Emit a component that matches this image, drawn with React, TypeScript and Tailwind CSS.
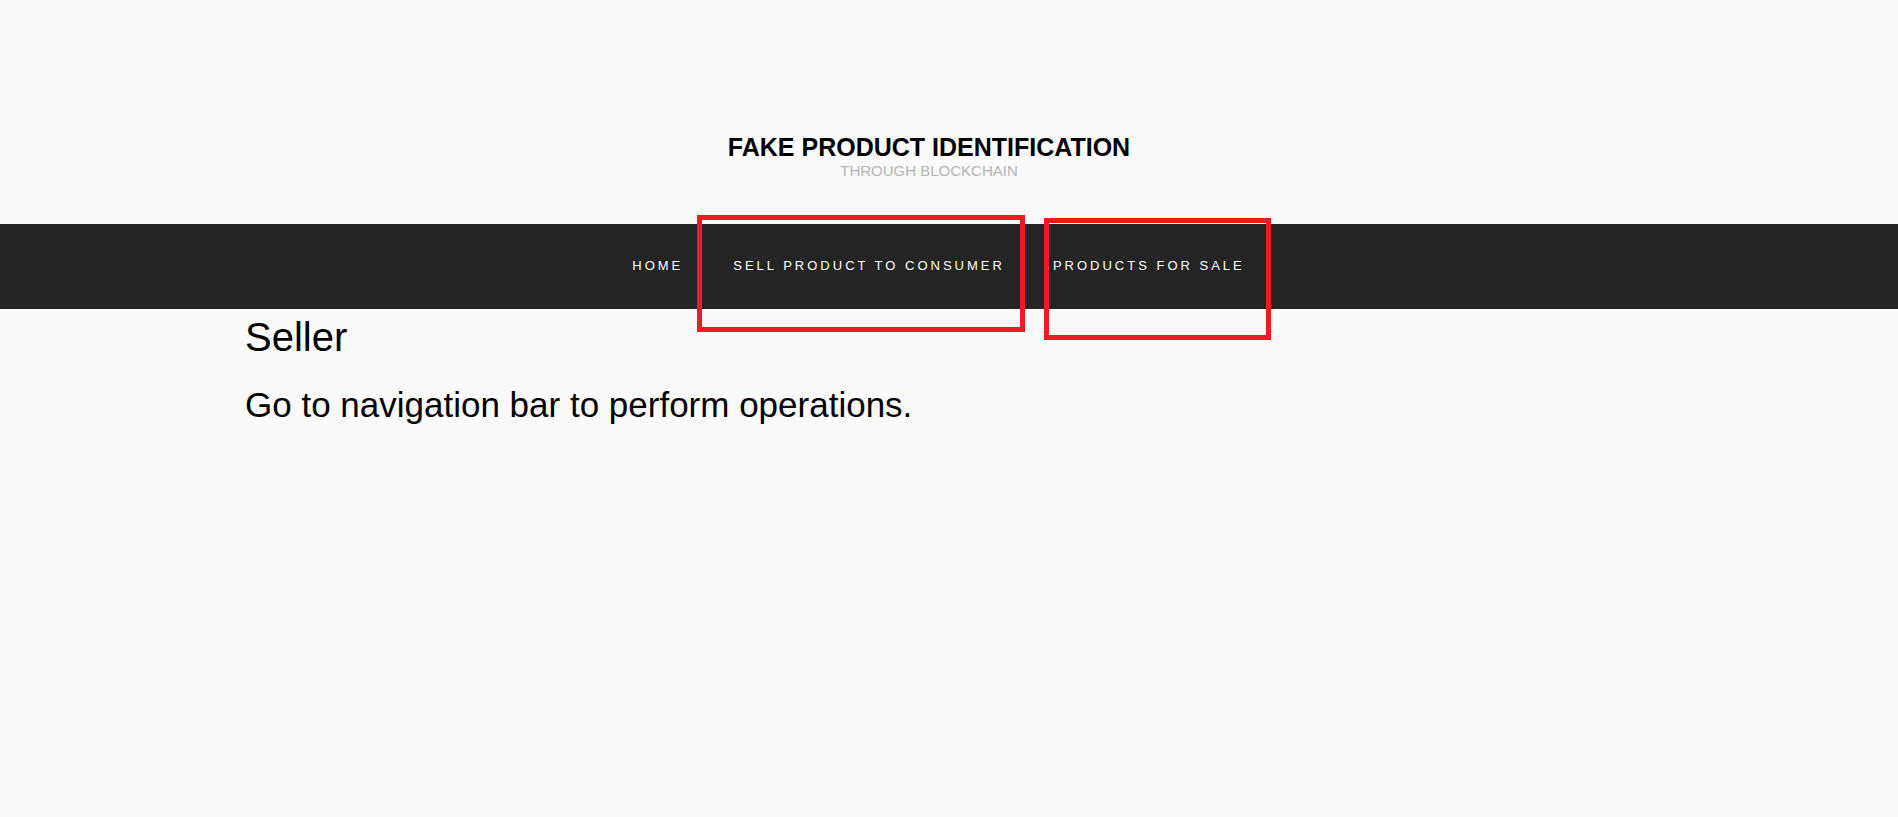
export default function App() {
  const links = ['HOME', 'SELL PRODUCT TO CONSUMER', 'PRODUCTS FOR SALE'];

  return (
    <div className="relative min-h-screen bg-[#fafafa] font-['Liberation_Sans',Arial,sans-serif] text-black">
      {/* Site title block */}
      <header className="flex flex-col items-center pt-[135px] pr-[40px]">
        <h1 className="text-[25px] leading-none font-bold">FAKE PRODUCT IDENTIFICATION</h1>
        <p className="mt-[3px] text-[15px] leading-none text-[#b5b5b5]">THROUGH BLOCKCHAIN</p>
      </header>

      <nav className="mt-[46px] flex h-[85px] items-center justify-center bg-[#242424] pr-[21px] pb-[3px]">
        <ul className="flex gap-[4px]">
          {links.map((l, i) => (
            <li key={l}>
              <a
                href="#"
                className={`block pl-[22px] text-[13px] leading-none tracking-[3px] text-white ${
                  i === 0 ? 'pr-[24px]' : 'pr-[22px]'
                }`}
              >
                {l}
              </a>
            </li>
          ))}
        </ul>
      </nav>

      <main className="pl-[245px]">
        <h2 className="mt-[8px] text-[40px] leading-none">Seller</h2>
        <p className="mt-[30px] text-[35px] leading-none">Go to navigation bar to perform operations.</p>
      </main>

      {/* Annotation boxes drawn over the nav */}
      <div className="absolute left-[697px] top-[215px] h-[117px] w-[328px] border-[5px] border-[#ed1c24]" />
      <div className="absolute left-[1044px] top-[218px] h-[122px] w-[227px] border-[5px] border-[#ed1c24]" />
    </div>
  );
}
